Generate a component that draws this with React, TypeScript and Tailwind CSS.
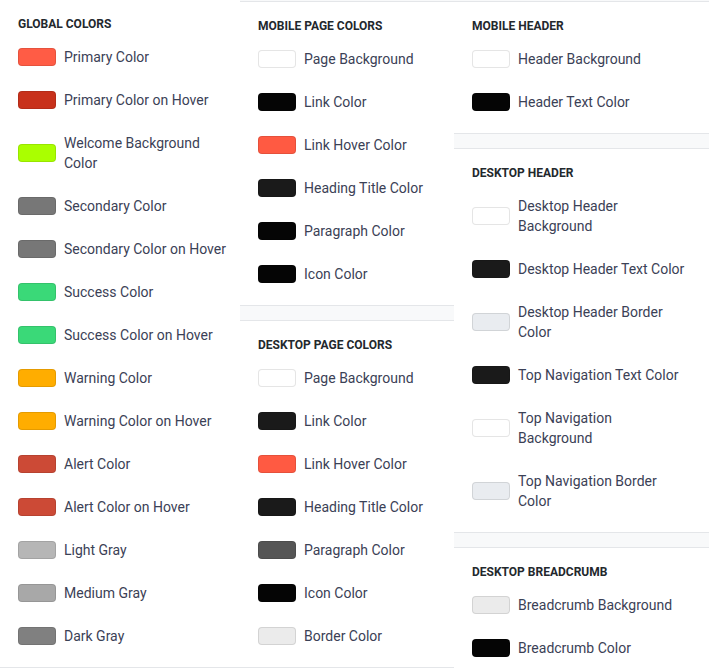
type Swatch = { label: string; color: string };
type Section = { title: string; items: Swatch[] };

const globalColors: Section = {
  title: 'Global Colors',
  items: [
    { label: 'Primary Color', color: '#ff5c45' },
    { label: 'Primary Color on Hover', color: '#c8311b' },
    { label: 'Welcome Background Color', color: '#aaff00' },
    { label: 'Secondary Color', color: '#777777' },
    { label: 'Secondary Color on Hover', color: '#777777' },
    { label: 'Success Color', color: '#3ad978' },
    { label: 'Success Color on Hover', color: '#3ad978' },
    { label: 'Warning Color', color: '#ffad00' },
    { label: 'Warning Color on Hover', color: '#ffad00' },
    { label: 'Alert Color', color: '#cc4a36' },
    { label: 'Alert Color on Hover', color: '#cc4a36' },
    { label: 'Light Gray', color: '#b6b6b6' },
    { label: 'Medium Gray', color: '#a8a8a8' },
    { label: 'Dark Gray', color: '#808080' },
  ],
};

const mobilePage: Section = {
  title: 'Mobile Page Colors',
  items: [
    { label: 'Page Background', color: '#ffffff' },
    { label: 'Link Color', color: '#050505' },
    { label: 'Link Hover Color', color: '#ff5a42' },
    { label: 'Heading Title Color', color: '#1a1a1a' },
    { label: 'Paragraph Color', color: '#050505' },
    { label: 'Icon Color', color: '#050505' },
  ],
};

const desktopPage: Section = {
  title: 'Desktop Page Colors',
  items: [
    { label: 'Page Background', color: '#ffffff' },
    { label: 'Link Color', color: '#1a1a1a' },
    { label: 'Link Hover Color', color: '#ff5a42' },
    { label: 'Heading Title Color', color: '#1a1a1a' },
    { label: 'Paragraph Color', color: '#555555' },
    { label: 'Icon Color', color: '#050505' },
    { label: 'Border Color', color: '#ebebeb' },
  ],
};

const mobileHeader: Section = {
  title: 'Mobile Header',
  items: [
    { label: 'Header Background', color: '#ffffff' },
    { label: 'Header Text Color', color: '#050505' },
  ],
};

const desktopHeader: Section = {
  title: 'Desktop Header',
  items: [
    { label: 'Desktop Header Background', color: '#ffffff' },
    { label: 'Desktop Header Text Color', color: '#1a1a1a' },
    { label: 'Desktop Header Border Color', color: '#e9ecf0' },
    { label: 'Top Navigation Text Color', color: '#1a1a1a' },
    { label: 'Top Navigation Background', color: '#ffffff' },
    { label: 'Top Navigation Border Color', color: '#e9ecf0' },
  ],
};

const breadcrumb: Section = {
  title: 'Desktop Breadcrumb',
  items: [
    { label: 'Breadcrumb Background', color: '#ebebeb' },
    { label: 'Breadcrumb Color', color: '#050505' },
  ],
};

function Card({ section, first, textWidth }: { section: Section; first?: boolean; textWidth: string }) {
  return (
    <div
      className={
        'bg-white border-b border-[#e4e6e9] pl-[18px] pb-[21px] ' +
        (first ? 'pt-[16px]' : 'border-t pt-[16px]')
      }
    >
      <h3 className="text-[12px] leading-4 font-bold uppercase text-[#23282d] mb-[15px]">{section.title}</h3>
      <div className="flex flex-col gap-[23px]">
        {section.items.map((it, i) => (
          <div key={i} className="flex items-center">
            <span
              className="w-[38px] h-[18px] rounded-[4px] border border-black/10 shrink-0"
              style={{ backgroundColor: it.color }}
            />
            <span className={'ml-[8px] text-[14px] leading-5 text-[#3b4156] ' + textWidth}>{it.label}</span>
          </div>
        ))}
      </div>
    </div>
  );
}

export default function App() {
  return (
    <div
      className="w-[709px] h-[668px] overflow-hidden bg-white flex"
      style={{ fontFamily: 'Roboto, "Liberation Sans", sans-serif' }}
    >
      <div className="w-[240px] shrink-0 flex flex-col gap-[14px] bg-[#f8f9fa] h-[800px]">
        <Card section={globalColors} first textWidth="w-[164px]" />
      </div>
      <div className="w-[214px] shrink-0 flex flex-col gap-[14px] bg-[#f8f9fa] pt-px h-[800px]">
        <Card section={mobilePage} textWidth="w-[170px]" />
        <Card section={desktopPage} textWidth="w-[170px]" />
      </div>
      <div className="flex-1 flex flex-col gap-[14px] bg-[#f8f9fa] pt-px h-[800px]">
        <Card section={mobileHeader} textWidth="w-[170px]" />
        <Card section={desktopHeader} textWidth="w-[170px]" />
        <Card section={breadcrumb} textWidth="w-[170px]" />
      </div>
    </div>
  );
}
